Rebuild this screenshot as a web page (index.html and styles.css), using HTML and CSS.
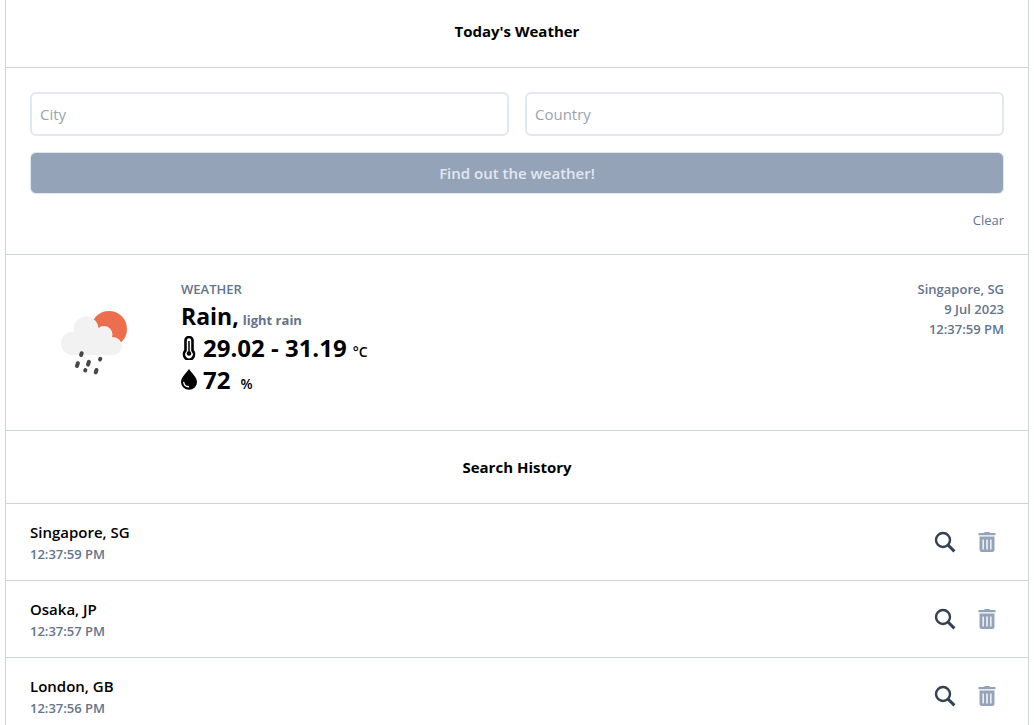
FILE: index.html
```html
<!DOCTYPE html>
<html lang="en">
<head>
<meta charset="utf-8">
<meta name="viewport" content="width=device-width, initial-scale=1">
<title>Today's Weather</title>
<link rel="stylesheet" href="styles.css">
</head>
<body>
<svg class="sprite" aria-hidden="true">
  <symbol id="search" viewBox="0 0 24 24"><circle cx="10" cy="10" r="7" fill="none" stroke="currentColor" stroke-width="2.4"/><path d="M15 15l6.400 6.400" fill="none" stroke="currentColor" stroke-width="3"/></symbol>
  <symbol id="trash" viewBox="0 0 24 24"><path fill="currentColor" fill-rule="evenodd" d="M3.500 3h5l1.500-1h4l1.500 1h5v2.300h-17zM4.500 6.500h15v13a2.500 2.500 0 0 1-2.500 2.500h-10a2.500 2.500 0 0 1-2.500-2.500zM7.500 9.500v10h1.300v-10zM11.300 9.500v10h1.400v-10zM15.200 9.500v10h1.300v-10z"/></symbol>
</svg>
<main class="panel">
  <header class="heading heading-top"><h1 class="title">Today's Weather</h1></header>
  <form class="search-form">
    <div class="fields">
      <input class="field" type="text" name="city" placeholder="City" aria-label="City">
      <input class="field" type="text" name="country" placeholder="Country" aria-label="Country">
    </div>
    <button class="submit" type="submit" disabled>Find out the weather!</button>
    <button class="clear" type="reset">Clear</button>
  </form>
  <section class="weather">
    <svg class="weather-icon" viewBox="0 0 127 127" role="img" aria-label="Rain">
      <circle cx="79" cy="50" r="18" fill="#ec6e4c"/>
      <g fill="#f2f2f2"><circle cx="42.500" cy="64.500" r="11.500"/><circle cx="56" cy="50" r="12.500"/><circle cx="74" cy="55.500" r="8.500"/><circle cx="83" cy="67" r="9"/><path d="M42 57L56 48l18 4 10 8v16H42z"/></g>
      <path d="M51.700 74.200l-.600 1.800M47.900 84.200l-.900 2.800M58.900 82.800l-.900 2.800M70.300 79.800l-.300.600M66.500 91l-.800 2.400M55.400 91l-.200.500" fill="none" stroke="#484848" stroke-width="4" stroke-linecap="round"/>
    </svg>
    <div class="details">
      <p class="label">WEATHER</p>
      <p class="reading"><strong>Rain,</strong><span class="description">light rain</span></p>
      <p class="reading measure">
        <svg class="gauge" viewBox="0 0 16 24" aria-hidden="true"><path d="M4.500 4.500a3.500 3.500 0 0 1 7 0v10a5 5.400 0 1 1-7 0z" fill="none" stroke="#000" stroke-width="2.600"/><circle cx="8" cy="17.500" r="2.300"/><path d="M8 5v12" stroke="#000" stroke-width="1.500"/></svg>
        <strong>29.02 - 31.19</strong><span class="unit">°C</span>
      </p>
      <p class="reading measure">
        <svg class="gauge" viewBox="0 0 16 24" aria-hidden="true"><path d="M8 1C5.500 4.500 0 9.500 0 14a8 7.800 0 0 0 16 0C16 9.500 10.500 4.500 8 1z"/><path d="M2.800 14.500a5 5 0 0 0 4.700 4.200" fill="none" stroke="#fff" stroke-width="1.400" stroke-linecap="round"/></svg>
        <strong>72</strong><span class="unit percent">%</span>
      </p>
    </div>
    <p class="place">Singapore, SG<br>9 Jul 2023<br>12:37:59 PM</p>
  </section>
  <header class="heading"><h2 class="title">Search History</h2></header>
  <ul class="history">
    <li class="entry">
      <div class="entry-text"><p class="city">Singapore, SG</p><p class="time">12:37:59 PM</p></div>
      <button class="icon-button" type="button" aria-label="Search Singapore, SG"><svg><use href="#search"/></svg></button>
      <button class="icon-button delete" type="button" aria-label="Delete Singapore, SG"><svg><use href="#trash"/></svg></button>
    </li>
    <li class="entry">
      <div class="entry-text"><p class="city">Osaka, JP</p><p class="time">12:37:57 PM</p></div>
      <button class="icon-button" type="button" aria-label="Search Osaka, JP"><svg><use href="#search"/></svg></button>
      <button class="icon-button delete" type="button" aria-label="Delete Osaka, JP"><svg><use href="#trash"/></svg></button>
    </li>
    <li class="entry">
      <div class="entry-text"><p class="city">London, GB</p><p class="time">12:37:56 PM</p></div>
      <button class="icon-button" type="button" aria-label="Search London, GB"><svg><use href="#search"/></svg></button>
      <button class="icon-button delete" type="button" aria-label="Delete London, GB"><svg><use href="#trash"/></svg></button>
    </li>
  </ul>
</main>
</body>
</html>
```
FILE: styles.css
```css
* { box-sizing: border-box; margin: 0; padding: 0; }
body {
  font-family: "Segoe UI", "Open Sans", "Noto Sans", sans-serif;
  font-size: 15px;
  line-height: 24px;
  color: #000;
  background: #fff;
}
button, input { font: inherit; }
button { border: 0; background: none; cursor: pointer; }
.sprite { display: none; }
.panel { margin: 0 5px; border: solid #cbd5e1; border-width: 0 1px; }
.heading { padding: 24px; border-bottom: 1px solid #cbd5e1; text-align: center; }
.heading-top { padding-top: 19px; }
.title { font-size: 15px; font-weight: 700; }
.search-form { display: flex; flex-direction: column; gap: 16px; padding: 24px; border-bottom: 1px solid #cbd5e1; }
.fields { display: grid; grid-template-columns: 1fr 1fr; gap: 16px; }
.field { min-width: 0; height: 44px; padding: 8px; border: 2px solid #e2e8f0; border-radius: 6px; background: #fff; }
.field::placeholder { color: #9ca3af; opacity: 1; }
.submit { padding: 8px; border: 1px solid #e2e8f0; border-radius: 6px; background: #94a3b8; color: #e2e8f0; font-weight: 600; }
.clear { align-self: flex-end; font-size: 13px; line-height: 20px; color: #64748b; }
.weather { display: flex; gap: 24px; padding: 24px; border-bottom: 1px solid #cbd5e1; }
.weather-icon { flex: none; width: 127px; height: 127px; }
.details { flex: 1; }
.label { margin-bottom: 1px; font-size: 13px; line-height: 20px; font-weight: 600; color: #64748b; }
.reading { display: flex; align-items: baseline; gap: 4px; font-size: 23px; line-height: 32px; }
.measure { gap: 6px; font-size: 24px; }
.description { font-size: 13px; line-height: 16px; font-weight: 700; color: #64748b; }
.unit { font-size: 14px; line-height: 16px; font-weight: 600; }
.percent { margin-left: 4px; }
.gauge { align-self: center; flex: none; width: 16px; height: 24px; }
.place { font-size: 13px; line-height: 20px; font-weight: 600; color: #64748b; text-align: right; }
.history { list-style: none; }
.entry { display: flex; align-items: center; gap: 18px; padding: 16px 29px 16px 24px; border-bottom: 1px solid #cbd5e1; }
.entry-text { flex: 1; }
.city { font-weight: 600; }
.time { font-size: 13px; line-height: 20px; font-weight: 600; color: #64748b; }
.icon-button { width: 24px; height: 24px; color: #334155; }
.icon-button svg { display: block; width: 24px; height: 24px; }
.delete { color: #94a3b8; }
```
